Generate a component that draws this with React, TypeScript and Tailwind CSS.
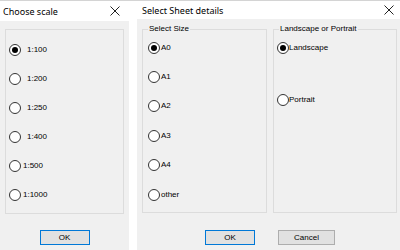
import React from "react";

const titleFont = { fontFamily: '"Noto Sans", "Open Sans", sans-serif' };
const labelFont = { fontFamily: '"Liberation Sans", Arial, sans-serif' };

function CloseX() {
  return (
    <svg width="10" height="10" viewBox="0 0 10 10">
      <path d="M0.5 0.5 L9.5 9.5 M9.5 0.5 L0.5 9.5" stroke="#222" strokeWidth="1" fill="none" />
    </svg>
  );
}

function Radio({ checked }: { checked?: boolean }) {
  return (
    <span className="flex h-[12px] w-[12px] shrink-0 items-center justify-center rounded-full border border-[#333] bg-white">
      {checked ? <span className="h-[6px] w-[6px] rounded-full bg-black" /> : null}
    </span>
  );
}

function Row({ label, checked, gap, h }: { label: string; checked?: boolean; gap: string; h: string }) {
  return (
    <div className={`flex items-center ${h} ${gap}`}>
      <Radio checked={checked} />
      <span className="text-[8px] leading-none text-black" style={labelFont}>
        {label}
      </span>
    </div>
  );
}

export default function App() {
  return (
    <div className="flex h-[250px] w-[400px] border-t border-[#d4d4d4] bg-white">
      {/* Left dialog */}
      <div className="flex w-[129px] flex-col">
        <div className="flex h-[20px] items-center justify-between pl-[3px] pr-[9px]">
          <span className="text-[9px] leading-none text-black" style={titleFont}>
            Choose scale
          </span>
          <CloseX />
        </div>
        <div className="flex flex-1 flex-col bg-[#f0f0f0] px-[5px] pt-[8px]">
          <div className="flex h-[185px] flex-col border border-[#dcdcdc] pl-[3px] pt-[5px]">
            <Row label="1:100" checked gap="gap-[6px]" h="h-[29px]" />
            <Row label="1:200" gap="gap-[6px]" h="h-[29px]" />
            <Row label="1:250" gap="gap-[6px]" h="h-[29px]" />
            <Row label="1:400" gap="gap-[6px]" h="h-[29px]" />
            <Row label="1:500" gap="gap-[2px]" h="h-[29px]" />
            <Row label="1:1000" gap="gap-[2px]" h="h-[29px]" />
          </div>
          <div className="mt-[16px] flex justify-center">
            <div
              className="flex h-[15px] w-[50px] items-center justify-center border border-[#0078d7] bg-[#e1e1e1] text-[8px] text-black"
              style={labelFont}
            >
              OK
            </div>
          </div>
        </div>
      </div>

      {/* Right dialog */}
      <div className="ml-[8px] flex flex-1 flex-col">
        <div className="flex h-[18px] items-center justify-between pl-[5px] pr-[6px]">
          <span className="text-[9px] leading-none text-black" style={titleFont}>
            Select Sheet details
          </span>
          <CloseX />
        </div>
        <div className="flex flex-1 flex-col bg-[#f0f0f0] pl-[5px] pr-[3px] pt-[10px]">
          <div className="flex gap-[6px]">
            <div className="relative flex h-[184px] w-[125px] flex-col border border-[#dcdcdc] pl-[5px] pt-[3px]">
              <span
                className="absolute left-[5px] top-[-5px] bg-[#f0f0f0] px-[1px] text-[8px] leading-none text-black"
                style={labelFont}
              >
                Select Size
              </span>
              <Row label="A0" checked gap="gap-[1px]" h="h-[29.4px]" />
              <Row label="A1" gap="gap-[1px]" h="h-[29.4px]" />
              <Row label="A2" gap="gap-[1px]" h="h-[29.4px]" />
              <Row label="A3" gap="gap-[1px]" h="h-[29.4px]" />
              <Row label="A4" gap="gap-[1px]" h="h-[29.4px]" />
              <Row label="other" gap="gap-[1px]" h="h-[29.4px]" />
            </div>
            <div className="relative flex h-[184px] flex-1 flex-col border border-[#dcdcdc] pl-[3px] pt-[3px]">
              <span
                className="absolute left-[5px] top-[-5px] bg-[#f0f0f0] px-[1px] text-[8px] leading-none text-black"
                style={labelFont}
              >
                Landscape or Portrait
              </span>
              <Row label="Landscape" checked gap="gap-[0px]" h="h-[29px]" />
              <div className="mt-[23px]">
                <Row label="Portrait" gap="gap-[0px]" h="h-[29px]" />
              </div>
            </div>
          </div>
          <div className="mt-[17px] flex gap-[23px] pl-[63px]">
            <div
              className="flex h-[15px] w-[50px] items-center justify-center border border-[#0078d7] bg-[#e1e1e1] text-[8px] text-black"
              style={labelFont}
            >
              OK
            </div>
            <div
              className="flex h-[15px] w-[57px] items-center justify-center border border-[#adadad] bg-[#e1e1e1] text-[8px] text-black"
              style={labelFont}
            >
              Cancel
            </div>
          </div>
        </div>
      </div>
    </div>
  );
}
